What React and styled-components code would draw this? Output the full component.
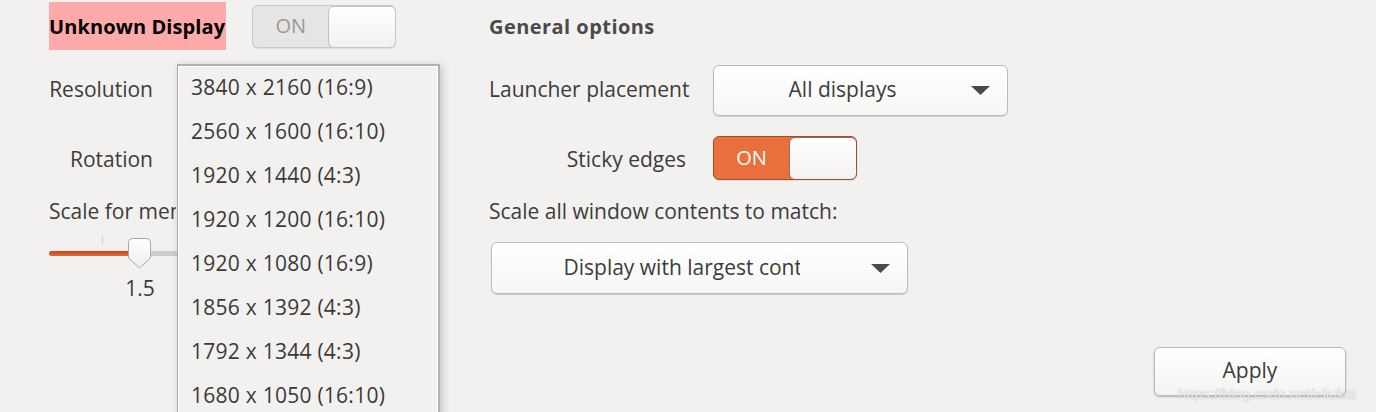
import React from "react";
import styled, { createGlobalStyle } from "styled-components";

const GlobalStyle = createGlobalStyle`
  html, body {
    margin: 0;
    padding: 0;
    height: 412px;
    overflow: hidden;
    background: #f2f1f0;
  }
  body {
    font-family: "Open Sans", "Noto Sans", sans-serif;
    color: #3c3c3c;
  }
`;

const Page = styled.div`
  position: relative;
  display: flex;
  height: 412px;
  padding-left: 49px;
  box-sizing: border-box;
  font-size: 21px;
`;

const LeftPanel = styled.div`
  width: 440px;
  display: flex;
  flex-direction: column;
`;

const RightPanel = styled.div`
  width: 857px;
  display: flex;
  flex-direction: column;
`;

const Row = styled.div`
  display: flex;
  align-items: center;
  height: ${(p) => p.$h}px;
  margin-top: ${(p) => p.$top || 0}px;
  gap: ${(p) => p.$gap || 0}px;
  justify-content: ${(p) => p.$justify || "flex-start"};
`;

const Label = styled.span`
  display: inline-block;
  width: ${(p) => (p.$w ? `${p.$w}px` : "auto")};
  text-align: ${(p) => p.$align || "left"};
  white-space: nowrap;
  overflow: ${(p) => (p.$clip ? "hidden" : "visible")};
  line-height: 1.2;
`;

const Heading = styled.span`
  font-weight: 700;
  font-size: 20px;
  letter-spacing: ${(p) => (p.$highlight ? "0.1px" : "0.45px")};
  color: ${(p) => (p.$highlight ? "#000" : "#4a4a4a")};
  background: ${(p) => (p.$highlight ? "#ffaaaa" : "transparent")};
  height: 48px;
  display: flex;
  align-items: center;
  padding-right: ${(p) => (p.$highlight ? 1 : 0)}px;
  white-space: nowrap;
`;

const Switch = styled.div`
  display: flex;
  width: 144px;
  height: ${(p) => p.$h}px;
  box-sizing: border-box;
  border-radius: 6px;
  border: 1px solid ${(p) => (p.$on ? "#a24d2a" : "#c9c7c4")};
  background: ${(p) => (p.$on ? "#e9703c" : "#e6e5e3")};
  overflow: hidden;
  box-shadow: 0 1px 1px rgba(0, 0, 0, 0.08);
  margin-bottom: ${(p) => p.$lift || 0}px;
`;

const SwitchText = styled.span`
  width: 75px;
  display: flex;
  align-items: center;
  justify-content: center;
  font-size: 20px;
  padding-bottom: 1px;
  color: ${(p) => (p.$on ? "#ffffff" : "#9b9896")};
`;

const SwitchKnob = styled.span`
  flex: 1;
  margin: 0 -1px -1px 0;
  border-radius: 6px;
  border: 1px solid ${(p) => (p.$on ? "#9c6a55" : "#c2c0bc")};
  background: linear-gradient(#ffffff, #f3f2f1);
`;

const Combo = styled.div`
  display: flex;
  align-items: center;
  width: ${(p) => p.$w}px;
  height: ${(p) => p.$h}px;
  box-sizing: border-box;
  border: 1px solid #bdbbb7;
  border-radius: 6px;
  background: linear-gradient(#ffffff, #f6f6f5);
  box-shadow: 0 1px 1px rgba(0, 0, 0, 0.15);
  padding-right: 17px;
  margin-left: ${(p) => p.$ml || 0}px;
`;

const ComboText = styled.span`
  flex: 1;
  display: flex;
  justify-content: center;
  overflow: hidden;
  padding-bottom: 2px;
  & > span {
    display: block;
    white-space: nowrap;
    overflow: hidden;
    width: ${(p) => (p.$clip ? `${p.$clip}px` : "auto")};
  }
`;

const Arrow = styled.svg`
  width: 19px;
  height: 9px;
  flex: none;
`;

const SliderBox = styled.div`
  position: relative;
  width: 380px;
  height: 30px;
  margin-top: ${(p) => p.$top}px;
`;

const Track = styled.div`
  position: absolute;
  left: 0;
  right: 0;
  top: 13px;
  height: 5px;
  border-radius: 3px;
  background: #cfcdca;
  overflow: hidden;
  & > div {
    height: 100%;
    background: linear-gradient(#c9481a, #e4693a);
  }
`;

const Tick = styled.div`
  position: absolute;
  left: 53px;
  top: -2px;
  width: 1px;
  height: 8px;
  background: #cfcdca;
`;

const Knob = styled.svg`
  position: absolute;
  left: 79px;
  top: 0;
  width: 23px;
  height: 31px;
`;

const Value = styled.div`
  width: 182px;
  text-align: center;
  margin-top: 8px;
  line-height: 24px;
`;

const Menu = styled.div`
  position: absolute;
  left: 177px;
  top: 64px;
  width: 263px;
  height: 360px;
  box-sizing: border-box;
  border: 1px solid #aeaca8;
  border-top: 2px solid #b4b2ae;
  border-right: 2px solid #b4b2ae;
  background: #f2f1f0;
  box-shadow: 0 0 0 1px #ffffff inset, 2px 2px 8px rgba(0, 0, 0, 0.2);
  padding-top: 0;
`;

const MenuItem = styled.div`
  height: 44px;
  display: flex;
  align-items: center;
  padding-left: 13px;
  padding-bottom: 3px;
  box-sizing: border-box;
  letter-spacing: 0.25px;
  white-space: nowrap;
  color: #3a3a3a;
`;

const Button = styled.div`
  width: 192px;
  height: 49px;
  box-sizing: border-box;
  border: 1px solid #bdbbb7;
  border-radius: 6px;
  background: linear-gradient(#ffffff, #f4f4f3);
  box-shadow: 0 1px 2px rgba(0, 0, 0, 0.25);
  display: flex;
  align-items: center;
  justify-content: center;
  padding-bottom: 4px;
`;

const Watermark = styled.div`
  position: absolute;
  left: 1178px;
  top: 385px;
  font-family: "Liberation Sans", sans-serif;
  font-size: 15px;
  color: rgba(255, 255, 255, 0.8);
  text-shadow: 0 0 1px rgba(110, 110, 110, 0.6);
  letter-spacing: -0.1px;
`;

const resolutions = [
  "3840 x 2160 (16:9)",
  "2560 x 1600 (16:10)",
  "1920 x 1440 (4:3)",
  "1920 x 1200 (16:10)",
  "1920 x 1080 (16:9)",
  "1856 x 1392 (4:3)",
  "1792 x 1344 (4:3)",
  "1680 x 1050 (16:10)",
];

const DownArrow = () => (
  <Arrow viewBox="0 0 19 9">
    <path d="M0 0 H19 L9.5 9 Z" fill="#4a4a4a" />
  </Arrow>
);

export default function App() {
  return (
    <>
      <GlobalStyle />
      <Page>
        <LeftPanel>
          <Row $h={52} $gap={26}>
            <Heading $highlight>Unknown Display</Heading>
            <Switch $h={43}>
              <SwitchText>ON</SwitchText>
              <SwitchKnob />
            </Switch>
          </Row>
          <Row $h={52} $top={12}>
            <Label $w={104} $align="right">Resolution</Label>
          </Row>
          <Row $h={48} $top={20}>
            <Label $w={104} $align="right">Rotation</Label>
          </Row>
          <Row $h={24} $top={16}>
            <Label $w={127} $clip>Scale for menu and title bars:</Label>
          </Row>
          <SliderBox $top={14}>
            <Track>
              <div style={{ width: "90px" }} />
            </Track>
            <Tick />
            <Knob viewBox="0 0 23 31">
              <defs>
                <linearGradient id="kg" x1="0" y1="0" x2="0" y2="1">
                  <stop offset="0" stopColor="#ffffff" />
                  <stop offset="1" stopColor="#efeeed" />
                </linearGradient>
              </defs>
              <path
                d="M4.5 0.5 H18.5 Q22.5 0.5 22.5 4.5 V20 L11.5 30 L0.5 20 V4.5 Q0.5 0.5 4.5 0.5 Z"
                fill="url(#kg)"
                stroke="#a9a7a3"
              />
            </Knob>
          </SliderBox>
          <Value>1.5</Value>
        </LeftPanel>
        <RightPanel>
          <Row $h={52}>
            <Heading>General options</Heading>
          </Row>
          <Row $h={52} $top={12} $gap={27}>
            <Label $w={197}>Launcher placement</Label>
            <Combo $w={295} $h={51}>
              <ComboText>
                <span>All displays</span>
              </ComboText>
              <DownArrow />
            </Combo>
          </Row>
          <Row $h={48} $top={20} $gap={27}>
            <Label $w={197} $align="right">Sticky edges</Label>
            <Switch $on $h={44} $lift={4}>
              <SwitchText $on>ON</SwitchText>
              <SwitchKnob $on />
            </Switch>
          </Row>
          <Row $h={24} $top={16}>
            <Label>Scale all window contents to match:</Label>
          </Row>
          <Row $h={52} $top={18}>
            <Combo $w={417} $h={52} $ml={2}>
              <ComboText $clip={236}>
                <span>Display with largest controls</span>
              </ComboText>
              <DownArrow />
            </Combo>
          </Row>
          <Row $h={49} $top={53} $justify="flex-end">
            <Button>Apply</Button>
          </Row>
        </RightPanel>
        <Menu>
          {resolutions.map((r) => (
            <MenuItem key={r}>{r}</MenuItem>
          ))}
        </Menu>
        <Watermark>https://blog.csdn.net/eliukai</Watermark>
      </Page>
    </>
  );
}
